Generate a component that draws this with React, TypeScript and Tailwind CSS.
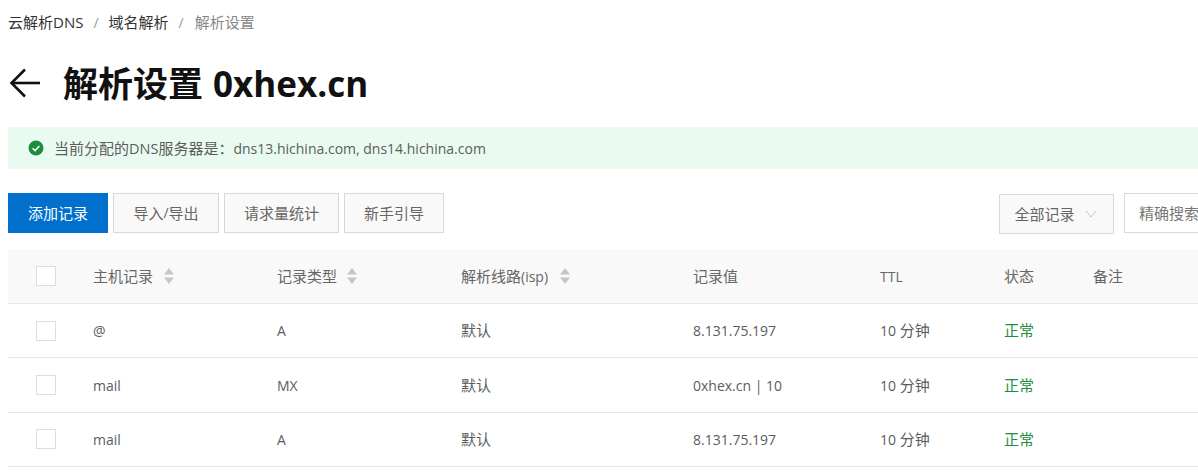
function L({ children }: { children: string }) {
  return <span className="text-sm">{children}</span>;
}

function Sort({ ml = "ml-[11px]" }: { ml?: string }) {
  return (
    <svg width="10" height="18" viewBox="0 0 10 18" className={`shrink-0 ${ml}`}>
      <path d="M5 1 L10 7.5 H0 Z" fill="#c4c6c8" />
      <path d="M0 10.5 H10 L5 17 Z" fill="#c4c6c8" />
    </svg>
  );
}

function Box() {
  return <span className="block h-5 w-5 border border-[#dcdfe0] bg-white" />;
}

function Btn({ children, w }: { children: React.ReactNode; w: string }) {
  return (
    <button className={`flex h-10 items-center justify-center border border-[#d7d8d9] bg-[#f9f9f9] text-[#666] ${w}`}>
      {children}
    </button>
  );
}

const GRID = "grid grid-cols-[85px_184px_184px_232px_187px_124px_89px_1fr] items-center";

const rows = [
  ["@", "A", "8.131.75.197"],
  ["mail", "MX", "0xhex.cn | 10"],
  ["mail", "A", "8.131.75.197"],
];

export default function App() {
  return (
    <div className="h-[472px] w-[1198px] overflow-hidden bg-white pl-2 font-['Open_Sans','Noto_Sans_CJK_SC',sans-serif] text-[15px] text-[#5c5c5c]">
      <nav className="flex h-[45px] items-center">
        <span className="text-[#333]">云解析DNS</span>
        <span className="mx-[10px] text-sm text-[#999]">/</span>
        <span className="text-[#333]">域名解析</span>
        <span className="mx-[10px] pr-px text-sm text-[#999]">/</span>
        <span className="text-[#888]">解析设置</span>
      </nav>

      <div className="flex h-[76px] items-center">
        <svg width="32" height="32" viewBox="0 0 32 32" fill="none" stroke="#111" strokeWidth="2.6" className="mr-[22px] ml-[1px] shrink-0">
          <path d="M31 16 H3" />
          <path d="M16 2.5 L2.5 16 L16 29.5" />
        </svg>
        <h1 className="text-[35px] leading-none font-bold text-[#111]">
          解析设置<span className="ml-[10px]">0xhex.cn</span>
        </h1>
      </div>

      <div className="mt-[6px] flex h-[42px] items-center bg-[#e9fbf0] pl-5">
        <svg width="16" height="16" viewBox="0 0 16 16" className="mr-[10px] shrink-0">
          <circle cx="8" cy="8" r="7.5" fill="#1e8e3e" />
          <path d="M4.6 8.2 L7.1 10.6 L11.4 5.9" fill="none" stroke="#fff" strokeWidth="1.5" />
        </svg>
        <span>当前分配的<span className="text-[14.5px]">DNS</span>服务器是：<L>dns13.hichina.com, dns14.hichina.com</L></span>
      </div>

      <div className="mt-6 flex h-10 items-start">
        <button className="flex h-10 w-[100px] items-center justify-center bg-[#0070cc] text-white">添加记录</button>
        <div className="ml-[5px] flex gap-[5px]">
          <Btn w="w-[106px]">导入<L>/</L>导出</Btn>
          <Btn w="w-[115px]">请求量统计</Btn>
          <Btn w="w-[100px]">新手引导</Btn>
        </div>
        <div className="ml-auto flex shrink-0 gap-[10px]">
          <button className="mt-[1px] flex h-10 w-[115px] items-center justify-center border border-[#d7d8d9] bg-[#f9f9f9] pr-[2px] text-[#666]">
            全部记录
            <svg width="12" height="8" viewBox="0 0 12 8" fill="none" stroke="#c4c6c8" className="ml-[10px]">
              <path d="M1 1 L6 7 L11 1" />
            </svg>
          </button>
          <div className="flex h-10 w-[74px] items-center overflow-hidden border border-r-0 border-[#d7d8d9] bg-white pl-[14px] whitespace-nowrap text-[#777]">
            精确搜索
          </div>
        </div>
      </div>

      <div className={`${GRID} mt-4 h-[55px] border-b border-[#e6e8ea] bg-[#f9f9f9] text-[#666]`}>
        <div className="pl-7"><Box /></div>
        <div className="flex items-center">主机记录<Sort /></div>
        <div className="flex items-center">记录类型<Sort ml="ml-[10px]" /></div>
        <div className="flex items-center"><span>解析线路<L>(isp)</L></span><Sort ml="ml-3" /></div>
        <div>记录值</div>
        <div><L>TTL</L></div>
        <div>状态</div>
        <div>备注</div>
      </div>

      {rows.map((r, i) => (
        <div key={i} className={`${GRID} h-[54.33px] border-b border-[#e3e8ee]`}>
          <div className="pl-7"><Box /></div>
          <div><L>{r[0]}</L></div>
          <div><L>{r[1]}</L></div>
          <div>默认</div>
          <div><L>{r[2]}</L></div>
          <div><L>10 </L>分钟</div>
          <div className="text-[#1e8e3e]">正常</div>
          <div />
        </div>
      ))}
    </div>
  );
}
